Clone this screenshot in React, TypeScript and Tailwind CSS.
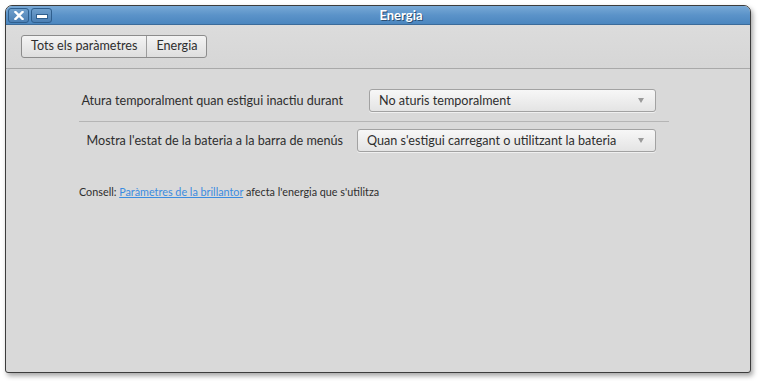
import React from 'react';

const font = { fontFamily: 'Lato, "Noto Sans", "DejaVu Sans", sans-serif' };

const Select: React.FC<{ label: string; width: string }> = ({ label, width }) => (
  <div
    className={`${width} h-[23px] flex items-center justify-between pl-[9px] pr-[11px] rounded-[3px] border border-[#a2a2a2] bg-gradient-to-b from-[#f7f7f7] to-[#e4e4e4] shadow-[0_1px_0_rgba(255,255,255,0.6)] text-[12.6px] text-[#2e2e2e] whitespace-nowrap`}
  >
    <span className="pt-[1px]">{label}</span>
    <span className="w-0 h-0 border-l-[3.5px] border-r-[3.5px] border-t-[5px] border-l-transparent border-r-transparent border-t-[#9a9a9a]" />
  </div>
);

export default function App() {
  return (
    <div className="w-[760px] h-[381px] bg-white pt-[5px] pl-[5px]" style={font}>
      <div className="w-[746px] h-[368px] flex flex-col rounded-t-[7px] rounded-b-[3px] border border-[#3c3c3c] bg-[#d9d9d9] shadow-[2px_3px_5px_rgba(0,0,0,0.35)] overflow-hidden">
        {/* title bar */}
        <div className="h-[19px] flex items-center bg-gradient-to-b from-[#78a9d6] via-[#5b93c9] to-[#4b86bf] border-b border-[#3b6b9a] pl-[2px]">
          <div className="w-[21px] h-[15px] rounded-[3px] border border-[#2f5f8e] bg-gradient-to-b from-[#6f9fcc] to-[#4c80b4] flex items-center justify-center">
            <svg width="10" height="9" viewBox="0 0 10 9">
              <path d="M1.5 1 L8.5 8 M8.5 1 L1.5 8" stroke="#fff" strokeWidth="2.4" strokeLinecap="square" />
            </svg>
          </div>
          <div className="ml-[2px] w-[21px] h-[15px] rounded-[3px] border border-[#2f5f8e] bg-gradient-to-b from-[#6f9fcc] to-[#4c80b4] flex items-end justify-center pb-[3px]">
            <div className="w-[10px] h-[3px] bg-white border border-[#2f5f8e] box-content" />
          </div>
          <div className="flex-1 text-center text-white font-bold text-[13px] leading-none [text-shadow:1px_1px_0_#2b4f74]">
            Energia
          </div>
        </div>

        {/* toolbar */}
        <div className="h-[44px] flex items-center pl-[15px] bg-gradient-to-b from-[#dcdcdc] to-[#d6d6d6] border-b border-[#a9a9a9]">
          <div className="flex h-[23px] rounded-[3px] border border-[#8c8c8c] bg-gradient-to-b from-[#f4f4f4] to-[#dedede] text-[12.6px] text-[#2e2e2e] whitespace-nowrap">
            <div className="px-[9px] flex items-center border-r border-[#9c9c9c]">Tots els paràmetres</div>
            <div className="px-[9px] flex items-center">Energia</div>
          </div>
        </div>

        {/* content */}
        <div className="flex flex-col pl-[73px] pt-[20px]">
          <div className="flex items-center h-[23px]">
            <div className="w-[264px] text-right text-[12.6px] text-[#2e2e2e] whitespace-nowrap pt-[1px]">Atura temporalment quan estigui inactiu durant</div>
            <div className="ml-[26px]">
              <Select label="No aturis temporalment" width="w-[287px]" />
            </div>
          </div>
          <div className="w-[590px] h-px bg-[#b5b5b5] mt-[9px] mb-[7px]" />
          <div className="flex items-center h-[23px]">
            <div className="w-[264px] text-right text-[12.6px] text-[#2e2e2e] whitespace-nowrap pt-[1px]">Mostra l'estat de la bateria a la barra de menús</div>
            <div className="ml-[14px]">
              <Select label="Quan s'estigui carregant o utilitzant la bateria" width="w-[299px]" />
            </div>
          </div>
          <div className="mt-[32px] text-[10.8px] text-[#2e2e2e]">
            Consell: <span className="text-[#3b8ce0] underline">Paràmetres de la brillantor</span> afecta l'energia que s'utilitza
          </div>
        </div>
      </div>
    </div>
  );
}
